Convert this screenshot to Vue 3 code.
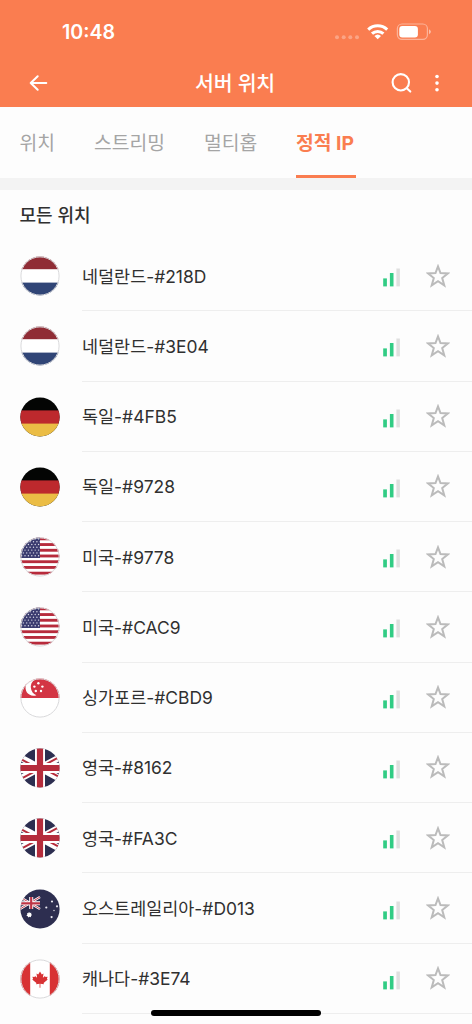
<script setup>
const tabs = [
  { label: '위치', width: 35.5 },
  { label: '스트리밍', width: 71 },
  { label: '멀티홉', width: 53 },
  { label: '정적 IP', width: 59.5, active: true },
]

const servers = [
  { country: '네덜란드', code: '#218D', flag: 'nl' },
  { country: '네덜란드', code: '#3E04', flag: 'nl' },
  { country: '독일', code: '#4FB5', flag: 'de' },
  { country: '독일', code: '#9728', flag: 'de' },
  { country: '미국', code: '#9778', flag: 'us' },
  { country: '미국', code: '#CAC9', flag: 'us' },
  { country: '싱가포르', code: '#CBD9', flag: 'sg' },
  { country: '영국', code: '#8162', flag: 'gb' },
  { country: '영국', code: '#FA3C', flag: 'gb' },
  { country: '오스트레일리아', code: '#D013', flag: 'au' },
  { country: '캐나다', code: '#3E74', flag: 'ca' },
]

// Staggered stars of the US canton
const usStars = []
for (let r = 0; r < 7; r++) {
  for (let c = 0; c < 6; c++) {
    usStars.push({ x: 1.6 + c * 3.4 + (r % 2) * 1.7, y: 1.9 + r * 2.8 })
  }
}
const sgStars = [[18.4, 5.2], [14.4, 8.6], [22.4, 8.6], [15.8, 13], [21, 13]]
const auStars = [[32, 13], [26.3, 19], [37, 17.8], [34, 22], [31.6, 28.6]]
</script>

<template>
  <div class="screen">
    <header class="header">
      <div class="status">
        <span class="time">10:48</span>
        <svg class="status-icons" width="98" height="20" viewBox="334 22 98 20">
          <g fill="#fff" opacity=".3">
            <circle cx="337" cy="37.2" r="2" /><circle cx="343.7" cy="37.2" r="2" />
            <circle cx="350.3" cy="37.2" r="2" /><circle cx="357" cy="37.2" r="2" />
          </g>
          <g fill="none" stroke="#fff" stroke-width="3">
            <path d="M368.2 29.6 A13.8 13.8 0 0 1 387.2 29.6" />
            <path d="M372 33.7 A8.2 8.2 0 0 1 383.4 33.7" />
          </g>
          <path d="M377.7 39.3 L374.4 36 A4.8 4.8 0 0 1 381 36 Z" fill="#fff" />
          <rect x="397.4" y="24" width="30" height="15.4" rx="4.6" fill="none" stroke="#fff" stroke-opacity=".42" stroke-width="1.2" />
          <rect x="399.3" y="26" width="18.6" height="11.4" rx="3" fill="#fff" />
          <path d="M429 29.3 Q430.9 30.3 430.9 31.8 T429 34.2 Z" fill="#fff" fill-opacity=".5" />
        </svg>
      </div>
      <div class="navbar">
        <svg class="back" width="20" height="20" viewBox="28 73 20 20" fill="none" stroke="#fff" stroke-width="2" stroke-linecap="round" stroke-linejoin="round">
          <path d="M46.3 83 H30.7 M37.7 76.2 L30.7 83 L37.7 89.8" />
        </svg>
        <h1 class="title">서버 위치</h1>
        <svg class="actions" width="52" height="22" viewBox="390 72 52 22">
          <g fill="none" stroke="#fff" stroke-width="2.1" stroke-linecap="round">
            <circle cx="400.8" cy="82.3" r="8.2" /><path d="M406.8 88.2 L410.3 91.6" />
          </g>
          <g fill="#fff">
            <circle cx="437" cy="76.5" r="1.8" /><circle cx="437" cy="83.1" r="1.8" /><circle cx="437" cy="89.7" r="1.8" />
          </g>
        </svg>
      </div>
    </header>

    <nav class="tabs">
      <div v-for="t in tabs" :key="t.label" class="tab" :class="{ active: t.active }" :style="{ width: t.width + 'px' }">{{ t.label }}</div>
    </nav>

    <h2 class="section">모든 위치</h2>

    <main class="list">
      <div v-for="s in servers" :key="s.country + s.code" class="row">
        <svg class="flag" width="40" height="40" viewBox="0 0 40 40">
          <defs>
            <clipPath :id="'disc' + s.code.slice(1)"><circle cx="20" cy="20" r="19.6" /></clipPath>
            <clipPath :id="'canton' + s.code.slice(1)"><rect width="20" height="20" /></clipPath>
          </defs>
          <g :clip-path="`url(#disc${s.code.slice(1)})`">
            <template v-if="s.flag === 'nl'">
              <rect width="40" height="40" fill="#fff" />
              <rect width="40" height="13.2" fill="#902c35" />
              <rect y="26.6" width="40" height="14" fill="#304576" />
            </template>
            <template v-else-if="s.flag === 'de'">
              <rect width="40" height="40" fill="#040504" />
              <rect y="13.4" width="40" height="14" fill="#bd292d" />
              <rect y="26.6" width="40" height="14" fill="#ebbd45" />
            </template>
            <template v-else-if="s.flag === 'us'">
              <rect width="40" height="40" fill="#fff" />
              <rect v-for="i in 7" :key="i" :y="(i - 1) * 5.72 + 0.4" width="40" height="2.86" fill="#b72b3c" />
              <rect width="20" height="21" fill="#3b3c70" />
              <g :clip-path="`url(#canton${s.code.slice(1)})`">
                <circle v-for="(p, i) in usStars" :key="i" :cx="p.x" :cy="p.y" r=".7" fill="#dcdce8" />
              </g>
            </template>
            <template v-else-if="s.flag === 'sg'">
              <rect width="40" height="40" fill="#fff" />
              <rect width="40" height="20" fill="#d33544" />
              <path d="M14.6 1.8 A8 8 0 1 0 16.4 17.2 A8.8 8.8 0 0 1 14.6 1.8 Z" fill="#fff" />
              <circle v-for="(p, i) in sgStars" :key="i" :cx="p[0]" :cy="p[1]" r="1.2" fill="#fff" />
            </template>
            <template v-else-if="s.flag === 'gb'">
              <rect width="40" height="40" fill="#2c2e50" />
              <path d="M-6 6 L46 34 M46 6 L-6 34" stroke="#fff" stroke-width="6.6" />
              <path d="M-6 7.4 L20 21.4 M46 5.4 L20 19.4 M-6 34.6 L20 20.6 M46 32.6 L20 18.6" stroke="#b52c3c" stroke-width="2" />
              <path d="M20 0 V40 M0 20 H40" stroke="#fff" stroke-width="10" />
              <path d="M20 0 V40 M0 20 H40" stroke="#b52c3c" stroke-width="6.2" />
            </template>
            <template v-else-if="s.flag === 'au'">
              <rect width="40" height="40" fill="#2d2e50" />
              <path d="M0 8 L20 20 M20 8 L0 20" stroke="#fff" stroke-width="2.5" />
              <path d="M0 8 L20 20 M20 8 L0 20" stroke="#bd3445" stroke-width=".9" />
              <path d="M11.2 8 V20 M0 14.3 H20" stroke="#fff" stroke-width="4" />
              <path d="M11.2 8 V20 M0 14.3 H20" stroke="#bd3445" stroke-width="2.2" />
              <path d="M9 22.8 L9.8 24 L11.3 23.7 L11.1 25.2 L12.3 26 L11 26.8 L10.9 28.2 L9.5 27.8 L8.3 28.6 L7.8 27.2 L6.3 26.8 L7.3 25.7 L6.9 24.2 L8.3 24.3 Z" fill="#fff" />
              <circle v-for="(p, i) in auStars" :key="i" :cx="p[0]" :cy="p[1] - .5" :r="i === 3 ? .7 : 1.1" fill="#e9e9f0" />
            </template>
            <template v-else>
              <rect width="40" height="40" fill="#fff" />
              <rect width="10.2" height="40" fill="#d83234" />
              <rect x="29.8" width="11" height="40" fill="#d83234" />
              <path d="M20 12.4 L21.8 15.4 L23.5 14.6 L22.9 18.8 L25 16.9 L25.4 18.1 L27.6 17.8 L26.9 19.9 L27.8 20.6 L23.6 24 L23.9 25.3 L20.4 24.8 V28.8 H19.6 V24.8 L16.1 25.3 L16.4 24 L12.2 20.6 L13.1 19.9 L12.4 17.8 L14.6 18.1 L15 16.9 L17.1 18.8 L16.5 14.6 L18.2 15.4 Z" fill="#d83234" />
            </template>
          </g>
          <circle v-if="['nl', 'us', 'sg', 'ca'].includes(s.flag)" cx="20" cy="20" r="19.1" fill="none" stroke="#d9d9db" stroke-width="1" />
        </svg>
        <div class="body">
          <span class="name"><span>{{ s.country }}</span><span class="code">-{{ s.code }}</span></span>
          <svg class="signal" width="18" height="20" viewBox="0 0 18 20">
            <rect x=".2" y="10.4" width="3.7" height="8" fill="#31cc84" />
            <rect x="6.9" y="5" width="3.6" height="13.4" fill="#31cc84" />
            <rect x="13.4" y=".5" width="3.5" height="17.9" fill="#dfdfdf" />
          </svg>
          <svg class="star" width="24" height="24" viewBox="0 0 24 24">
            <path d="M12 2.4 L14.5 9.1 L22 9.4 L16.2 14 L18.3 21.4 L12 17.2 L5.7 21.4 L7.8 14 L2 9.4 L9.5 9.1 Z" fill="none" stroke="#bbb" stroke-width="2" />
          </svg>
        </div>
      </div>
    </main>
    <div class="home-indicator"></div>
  </div>
</template>

<style>
body { background: #fdfdfd; }
</style>

<style scoped>
.screen {
  position: relative;
  height: 1024px;
  overflow: hidden;
  background: #fdfdfd;
  color: #303030;
  font-family: Inter, "Noto Sans CJK KR", sans-serif;
}
.header { height: 107px; background: #fa7d50; color: #fff; }
.status { display: flex; justify-content: space-between; height: 64px; padding: 0 40px 0 62px; }
.time { font-size: 19.6px; line-height: 65px; font-weight: 600; }
.status-icons { margin-top: 22px; }
.navbar { display: grid; grid-template-columns: 80px 1fr 82px; height: 38px; align-items: center; }
.back { margin-left: 28px; }
.title { margin: 0; padding-top: 2px; text-align: center; font-size: 20.5px; font-weight: 500; line-height: 36px; letter-spacing: -.2px; }
.actions { margin: 0; }
.tabs { display: flex; gap: 39px; height: 71px; padding-left: 19.5px; border-bottom: 12px solid #f3f3f3; }
.tab { box-sizing: border-box; height: 71px; line-height: 73px; font-size: 19.3px; color: #a5a5a5; white-space: nowrap; }
.tab.active { color: #fa7d50; font-weight: 700; border-bottom: 3px solid #fa7d50; }
.section { height: 51px; margin: 0; padding-left: 19.5px; line-height: 52px; font-size: 18px; font-weight: 500; }
.row { display: flex; height: 70.27px; padding-left: 20px; align-items: center; }
.flag { flex: none; margin-right: 22px; }
.body { flex: 1; display: flex; align-items: center; height: 100%; box-sizing: border-box; border-bottom: 1px solid #eee; }
.name { flex: 1; padding-bottom: 1px; font-size: 17.45px; white-space: nowrap; }
.signal { margin-right: 25px; margin-top: 5px; }
.star { margin-right: 22px; }
.home-indicator { position: absolute; left: 151px; top: 1009.5px; width: 170px; height: 6px; border-radius: 3px; background: #000; }
</style>
